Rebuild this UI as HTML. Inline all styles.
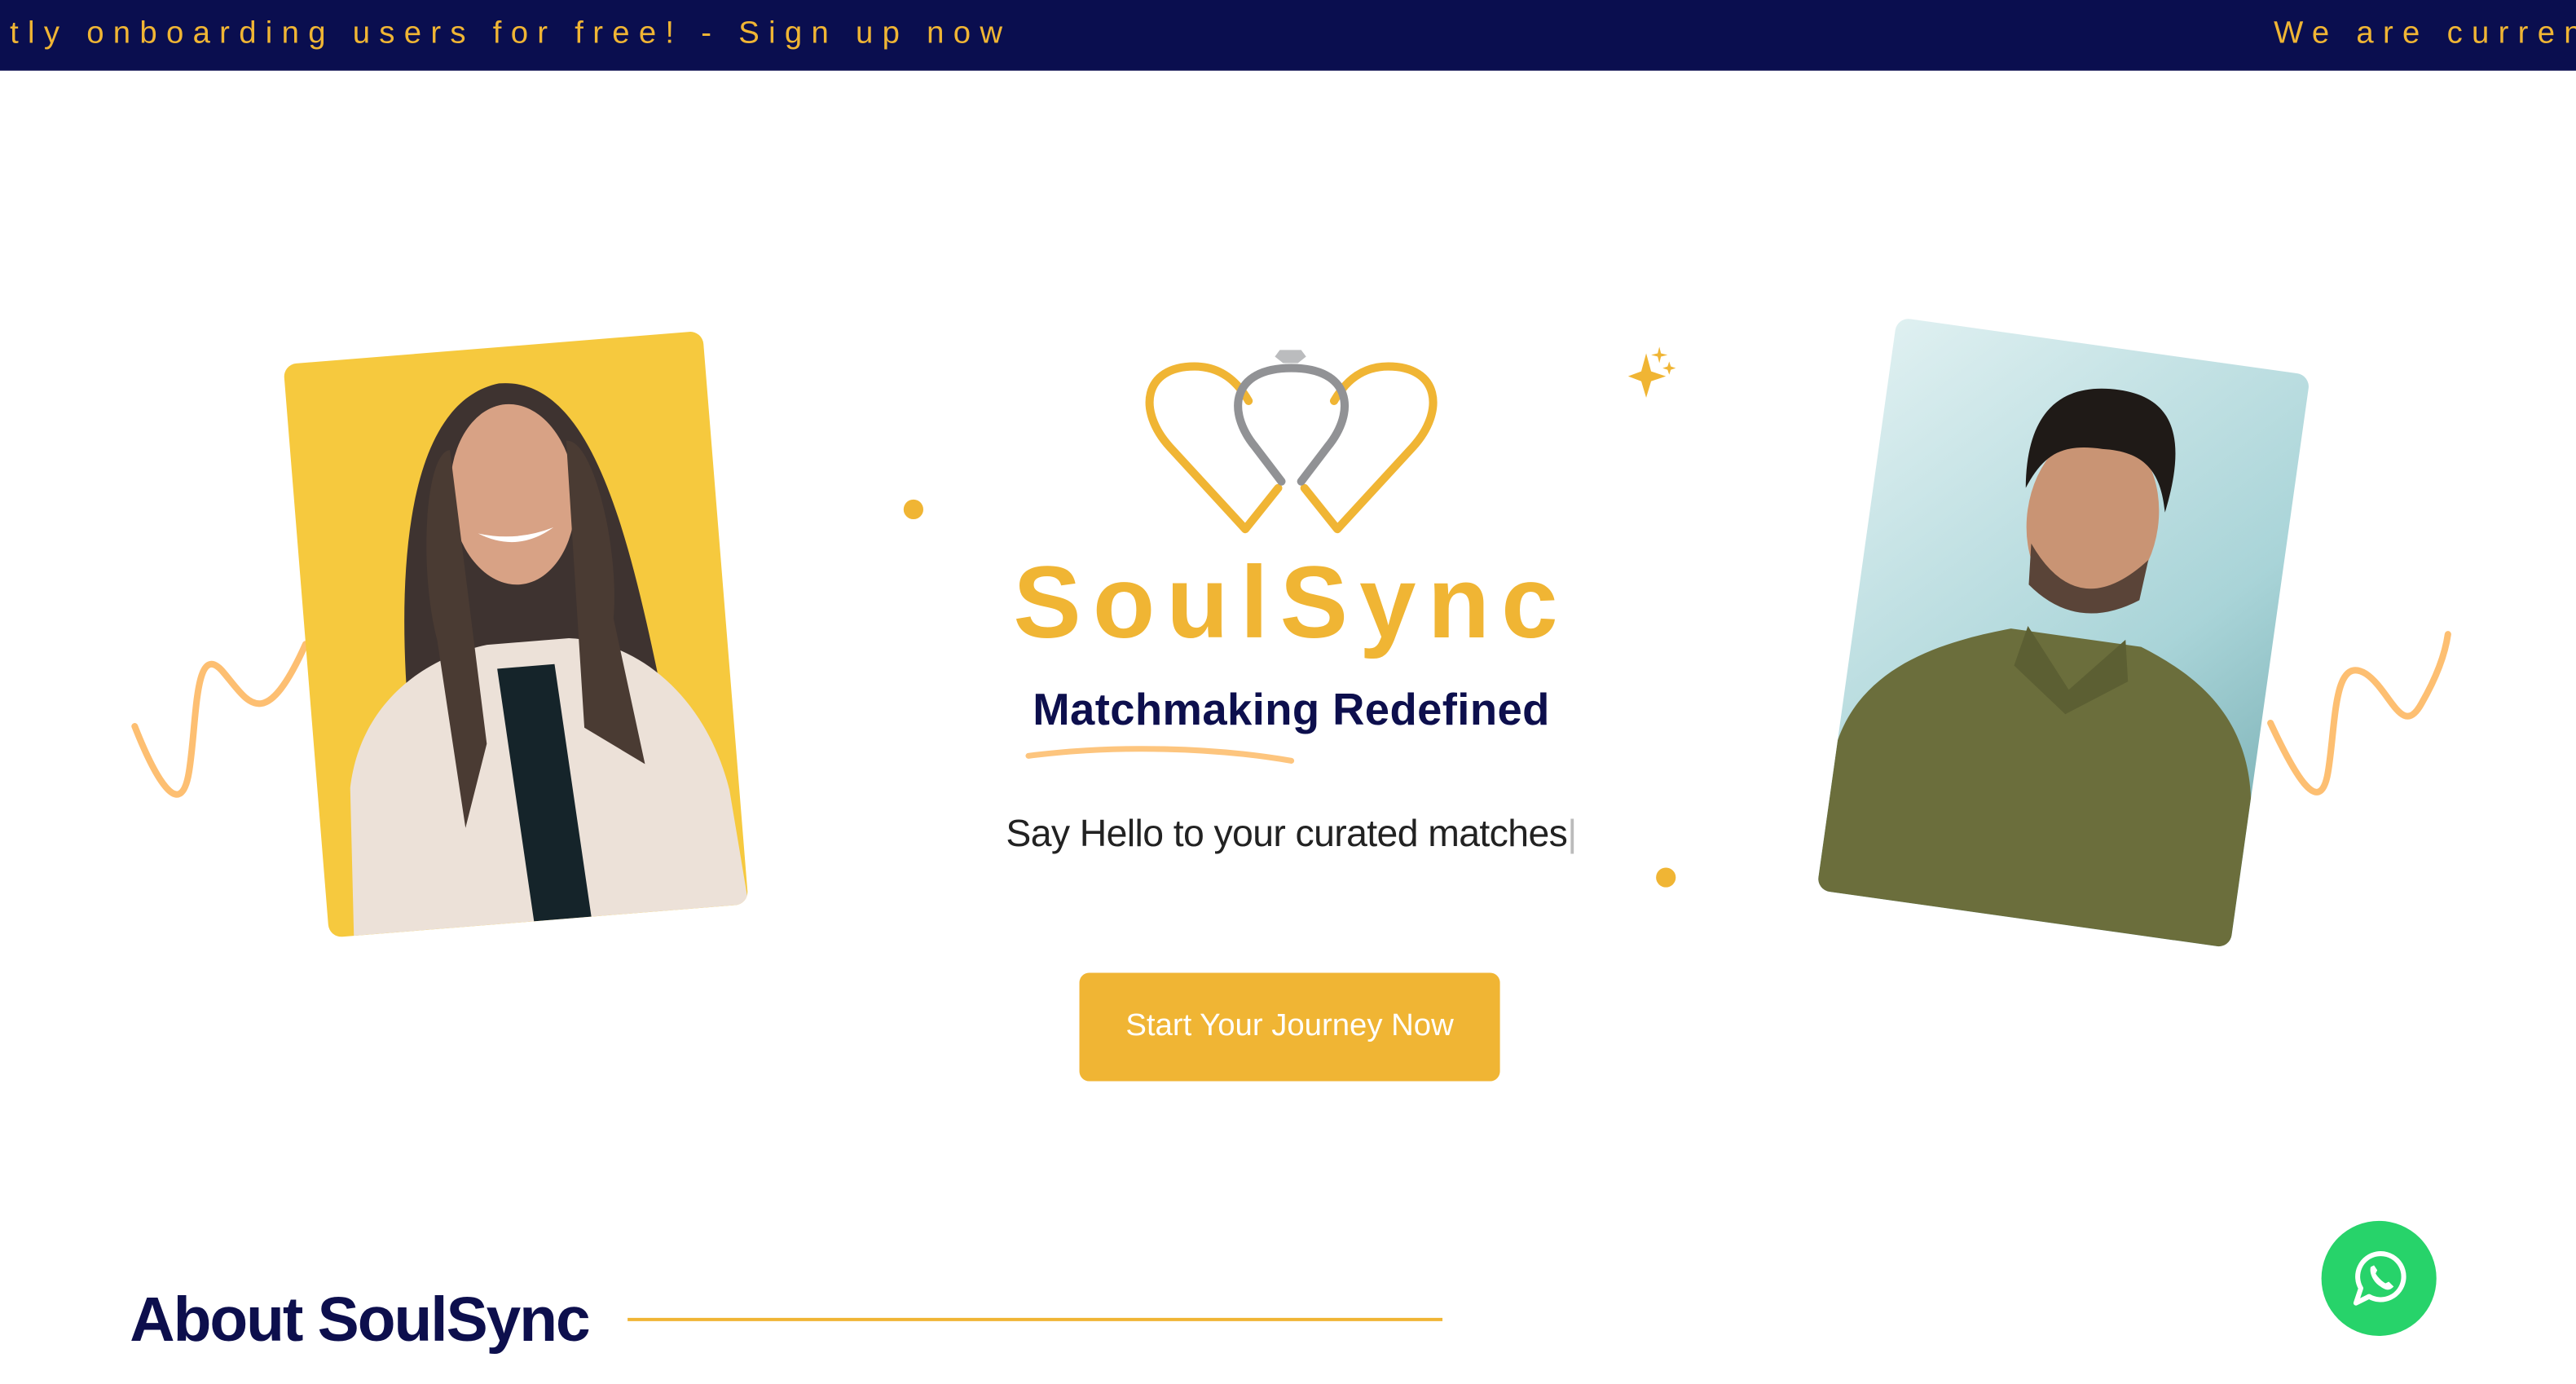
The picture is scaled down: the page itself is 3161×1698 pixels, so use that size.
<!DOCTYPE html>
<html><head><meta charset="utf-8"><style>
html,body{margin:0;padding:0;background:#fff;overflow:hidden;}
body{width:3161px;height:1698px;}
#w{position:absolute;left:0;top:0;width:1568px;height:842px;transform:scale(2.016);transform-origin:0 0;font-family:"Liberation Sans",sans-serif;}
.bar{position:absolute;left:0;top:0;width:1568px;height:43px;background:#0a0e4f;color:#f0b534;font-size:19px;letter-spacing:5.6px;line-height:42px;white-space:nowrap;overflow:hidden;}
.card{position:absolute;border-radius:8px;overflow:hidden;}
.abs{position:absolute;}
</style></head><body><div id="w">
<div class="bar"><span class="abs" style="left:6px">tly onboarding users for free! - Sign up now</span><span class="abs" style="left:1384px">We are currently</span></div>

<svg class="abs" style="left:0;top:0" width="1568" height="842">
<path d="M82,442 C95,475 110,500 115,470 C120,440 118,390 135,408 C150,425 160,450 186,392" fill="none" stroke="#fdbf72" stroke-width="4" stroke-linecap="round"/>
<path d="M1382,440 C1395,468 1412,500 1417,470 C1422,440 1420,398 1440,410 C1455,420 1462,450 1474,428 C1482,414 1488,400 1490,386" fill="none" stroke="#fdbf72" stroke-width="4" stroke-linecap="round"/>
<circle cx="556" cy="310" r="6" fill="#f0b534"/>
<circle cx="1014" cy="534" r="6" fill="#f0b534"/>
<path d="M1002,215 L1005,226 L1014,229 L1005,232 L1002,242 L999,232 L991,229 L999,226 Z" fill="#f0b534"/>
<path d="M1010,211 l1,4 4,1 -4,1 -1,4 -1,-4 -4,-1 4,-1z M1016,220 l1,3 3,1 -3,1 -1,3 -1,-3 -3,-1 3,-1z" fill="#f0b534"/>
<path d="M778,297 L758,322 L712,272 C692,250 696,223 727,223 C743,223 753,232 760,244" fill="none" stroke="#f0b534" stroke-width="5" stroke-linecap="round" stroke-linejoin="round"/>
<path d="M794,297 L814,322 L860,272 C880,250 876,223 845,223 C829,223 819,232 812,244" fill="none" stroke="#f0b534" stroke-width="5" stroke-linecap="round" stroke-linejoin="round"/>
<path d="M780,293 L764,272 C746,250 750,224 786,224 C822,224 826,250 808,272 L792,293" fill="none" stroke="#919295" stroke-width="5" stroke-linecap="round"/>
<path d="M779,213 L792,213 L795,217 L790,221 L781,221 L776,217 Z" fill="#bbbcbe"/>
<path d="M626,460 C680,453 740,455 786,463" fill="none" stroke="#fdc57e" stroke-width="3.5" stroke-linecap="round"/>
<line x1="382" y1="803" x2="878" y2="803" stroke="#f0b534" stroke-width="2"/>
</svg>

<div class="card" style="left:186px;top:211px;width:256px;height:350px;transform:rotate(-4.6deg);background:#f6c93e;">
<svg width="256" height="350" style="position:absolute;left:0;top:0">
<path d="M60,260 C55,160 65,30 130,22 C195,22 205,150 220,270 Z" fill="#3e3330"/>
<ellipse cx="133" cy="90" rx="38" ry="55" fill="#d8a285"/>
<path d="M110,112 Q133,126 156,112 Q133,119 110,112Z" fill="#fff"/>
<path d="M20,260 C30,210 70,185 110,180 L160,180 C200,185 240,220 250,280 L256,350 L15,350 Z" fill="#ece1d8"/>
<path d="M115,195 L150,195 L160,350 L125,350 Z" fill="#15242a"/>
<path d="M80,175 C72,130 82,60 97,60 L105,240 L88,290 Z M188,170 C195,130 185,60 168,60 L165,235 L200,260 Z" fill="#4a3b33"/>
</svg></div>

<div class="card" style="left:1129px;top:209px;width:254px;height:352px;transform:rotate(8deg);background:linear-gradient(135deg,#dff0f1,#a9d4d8 60%,#6fa7ac);">
<svg width="254" height="352" style="position:absolute;left:0;top:0">
<ellipse cx="135" cy="105" rx="40" ry="55" fill="#c99474"/>
<path d="M92,92 C85,40 110,25 140,25 C175,25 185,50 178,95 C172,70 160,60 135,62 C110,62 100,70 92,92Z" fill="#1f1a17"/>
<path d="M100,125 Q135,170 172,125 L170,150 Q135,175 102,150Z" fill="#5a4438"/>
<path d="M0,260 C10,210 60,190 95,178 L175,178 C210,190 245,210 254,260 L254,352 L0,352 Z" fill="#6b6e3c"/>
<path d="M105,175 L135,210 L165,175 L170,200 L135,225 L100,200Z" fill="#5c5f33"/>
</svg></div>

<div class="abs" style="left:560px;top:330px;width:452px;text-align:center;color:#f0b534;font-size:62px;letter-spacing:7px;line-height:76px;font-weight:bold;">SoulSync</div>
<div class="abs" style="left:600px;top:414px;width:372px;text-align:center;color:#0d0f4d;font-size:27px;font-weight:bold;line-height:36px;letter-spacing:0.2px;">Matchmaking Redefined</div>
<div class="abs" style="left:560px;top:492px;width:452px;text-align:center;color:#222;font-size:23px;line-height:30px;letter-spacing:-0.3px;">Say Hello to your curated matches<span style="color:#bbb">|</span></div>
<div class="abs" style="left:657px;top:592px;width:256px;height:66px;background:#f0b534;border-radius:6px;color:#fff;font-size:19px;line-height:66px;text-align:center;">Start Your Journey Now</div>
<div class="abs" style="left:79px;top:780px;color:#0d0f4d;font-size:38px;font-weight:bold;letter-spacing:-1px;line-height:48px;">About SoulSync</div>

<div class="abs" style="left:1413px;top:743px;width:70px;height:70px;border-radius:50%;background:#27d36a;">
<svg width="70" height="70" viewBox="0 0 70 70"><path d="M21,50 L24,41 A14,14 0 1 1 29,46 Z" fill="none" stroke="#fff" stroke-width="3" stroke-linejoin="round"/><path d="M30,28 C29,31 31,37 36,40 C40,43 42,42 44,40 L41,37 L39,38 C37,37 34,34 33,32 L34,30 L32,27 Z" fill="#fff"/></svg>
</div>
</div></body></html>
